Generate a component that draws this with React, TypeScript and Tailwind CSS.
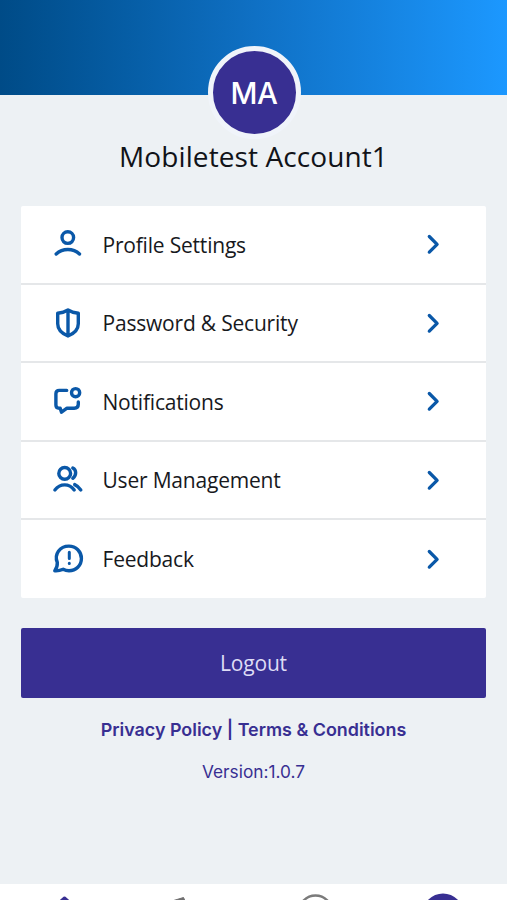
import React from "react";

const iconProps = {
  width: 32,
  height: 32,
  viewBox: "0 0 32 32",
  fill: "none",
  stroke: "currentColor",
  strokeWidth: 3.4,
  strokeLinecap: "round" as const,
  strokeLinejoin: "round" as const,
};

const ProfileIcon = () => (
  <svg {...iconProps}>
    <circle cx="15.8" cy="9.6" r="5.8" />
    <path d="M4.2 26C10.5 20 21.2 20 27.5 26" />
  </svg>
);

const ShieldIcon = () => (
  <svg {...iconProps}>
    <path d="M16 3C13 4.9 9.6 5.8 5.7 6.2V16.8C5.7 22.8 9.5 26.4 16 29C22.5 26.4 26.3 22.8 26.3 16.8V6.2C22.4 5.8 19 4.9 16 3ZM16 3.5V28" />
  </svg>
);

const NotificationIcon = () => (
  <svg {...iconProps}>
    <path d="M14.7 5.4H7.2Q3.9 5.4 3.9 8.7V20Q3.9 23.2 7.2 23.2H8.2L9.5 27.2L15 23.2H22.2Q26.3 23.2 26.3 19.2V16.9" />
    <circle cx="23.6" cy="7.7" r="4.1" />
  </svg>
);

const UsersIcon = () => (
  <svg {...iconProps}>
    <circle cx="12.7" cy="9.4" r="5.9" />
    <path d="M20.8 4.1C24.6 6 24.6 11.4 20.8 14.3" />
    <path d="M2.9 26C8.2 19.2 17.2 19.2 22.2 26" />
    <path d="M22.7 20.6C25.2 21.7 27.1 23.6 28.8 25.9" />
  </svg>
);

const FeedbackIcon = () => (
  <svg {...iconProps}>
    <path d="M5.3 19.5C1.9 11.2 7.8 3.1 16.9 3.1C24 3.1 29.4 8.7 29.4 15.4C29.4 22.4 24 27.7 17 27.7C14.7 27.7 12.9 27.2 11.2 26.3C8.4 27.5 5.6 28 2.8 27.8C4.7 25.2 5.5 22.4 5.3 19.5Z" />
    <path strokeWidth="3" d="M17.3 9.2V15.6M17.3 20.3V20.4" />
  </svg>
);

const menuItems = [
  { label: "Profile Settings", icon: <ProfileIcon /> },
  { label: "Password & Security", icon: <ShieldIcon /> },
  { label: "Notifications", icon: <NotificationIcon /> },
  { label: "User Management", icon: <UsersIcon /> },
  { label: "Feedback", icon: <FeedbackIcon /> },
];

const App = () => {
  return (
    <div className="flex h-[900px] w-[507px] flex-col overflow-hidden bg-[#edf1f4] font-['Open_Sans',sans-serif]">
      {/* Header with the avatar hanging over its bottom edge */}
      <header className="flex h-[95px] shrink-0 justify-center bg-linear-to-r from-[#004b87] via-[#0f70c4] to-[#1c98ff] pt-[46px] pl-px">
        <div className="flex h-[93px] w-[93px] items-center justify-center rounded-full border-[5px] border-[#f0f4fa] bg-[#382f92] pt-[2px] font-['Inter',sans-serif] text-[29.5px] font-medium tracking-[-0.5px] text-white">
          MA
        </div>
      </header>

      <h1 className="mt-[41px] text-center text-[28px] leading-[40px] tracking-[0.1px] text-[#111318]">
        Mobiletest Account1
      </h1>

      <ul className="mx-[21px] mt-[30px] h-[392px] rounded-[2px] bg-white">
        {menuItems.map((item) => (
          <li
            key={item.label}
            className="flex h-[78.5px] items-center border-b-2 border-[#e5e7e9] pr-[46px] pl-[31px] last:h-[78px] last:border-b-0"
          >
            <span className="text-[#0a58a8]">{item.icon}</span>
            <span className="ml-[18.5px] flex-1 pt-[2px] text-[21px] tracking-[-0.2px] text-[#17191d]">
              {item.label}
            </span>
            <svg
              className="text-[#0a58a8]"
              width="14"
              height="22"
              viewBox="0 0 14 22"
              fill="none"
              stroke="currentColor"
              strokeWidth="3.3"
              strokeLinecap="round"
              strokeLinejoin="round"
            >
              <path d="M3.3 3.5L11.1 11.3L3.3 19.1" />
            </svg>
          </li>
        ))}
      </ul>

      <button className="mx-[21px] mt-[30px] h-[70px] shrink-0 rounded-[2px] bg-[#382f92] pt-[2px] text-[21px] tracking-[-0.2px] text-[#dedcf5]">
        Logout
      </button>

      <p className="mt-[19px] text-center font-['Inter',sans-serif] text-[17.9px] leading-[26px] font-semibold text-[#382f92]">
        Privacy Policy | Terms &amp; Conditions
      </p>
      <p className="mt-[16px] text-center font-['Inter',sans-serif] text-[17.3px] leading-[26px] text-[#382f92]">
        Version:1.0.7
      </p>

      {/* Tab bar, only its top edge is in view */}
      <nav className="mt-auto h-[16px] shrink-0 overflow-hidden bg-white">
        <svg width="507" height="16" viewBox="0 0 507 16" fill="none">
          <path d="M54 23L64.5 14L75 23" stroke="#382f92" strokeWidth="3" strokeLinejoin="round" />
          <path d="M172 17L183.5 13.5L185.5 18Z" fill="#706f70" stroke="#706f70" strokeLinejoin="round" />
          <circle cx="315.5" cy="28" r="16.5" stroke="#7b7b7b" strokeWidth="2.5" />
          <circle cx="443" cy="30" r="20.5" fill="#382f92" />
        </svg>
      </nav>
    </div>
  );
};

export default App;
